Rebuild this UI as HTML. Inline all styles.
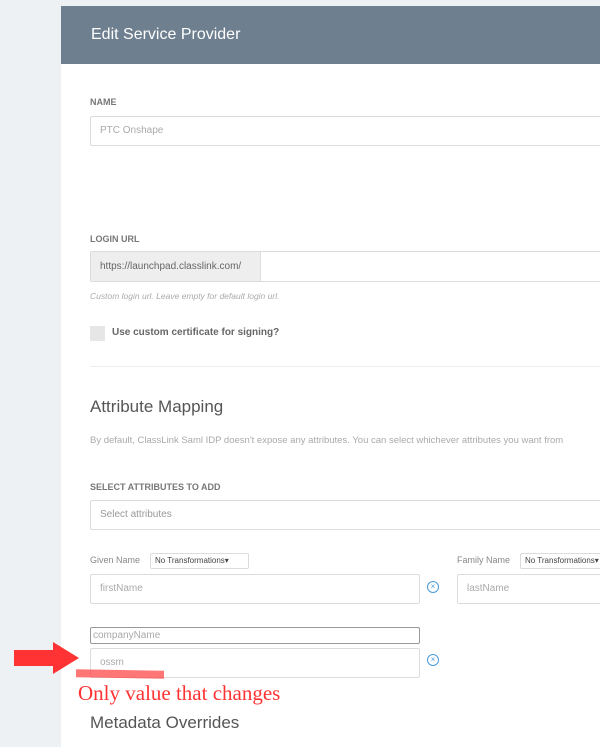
<!DOCTYPE html>
<html><head><style>
body{margin:0;width:600px;height:747px;background:#eef1f4;font-family:"Liberation Sans",sans-serif;position:relative;overflow:hidden}
.a{position:absolute}
.panel{left:61px;top:6px;width:539px;height:741px;background:#fff}
.hdr{left:61px;top:6px;width:539px;height:58px;background:#6e7f8f;color:#fff;font-size:16px;line-height:58px;text-indent:30px}
.lbl{font-size:9px;font-weight:bold;color:#777}
.inp{border:1px solid #dcdcdc;border-radius:2px;background:#fff;box-sizing:border-box;font-size:10px;color:#aaa;padding-left:9px}
.x{width:10px;height:10px;border:1px solid #4a9ad8;border-radius:50%;color:#4a9ad8;font-size:8px;line-height:10px;text-align:center}
</style></head><body>
<div class="a panel"></div>
<div class="a hdr">Edit Service Provider</div>
<div class="a lbl" style="left:90px;top:97px">NAME</div>
<div class="a inp" style="left:90px;top:116px;width:520px;height:30px;line-height:28px">PTC Onshape</div>
<div class="a lbl" style="left:90px;top:234px">LOGIN URL</div>
<div class="a inp" style="left:90px;top:251px;width:520px;height:31px"></div>
<div class="a" style="left:91px;top:252px;width:169px;height:29px;background:#eee;border-right:1px solid #ddd;font-size:10px;color:#666;line-height:29px;text-indent:9px">https://launchpad.classlink.com/</div>
<div class="a" style="left:90px;top:291px;font-size:8.5px;font-style:italic;color:#aaa">Custom login url. Leave empty for default login url.</div>
<div class="a" style="left:90px;top:326px;width:15px;height:15px;background:#e6e6e6"></div>
<div class="a" style="left:112px;top:327px;font-size:10px;font-weight:bold;color:#666">Use custom certificate for signing?</div>
<div class="a" style="left:90px;top:366px;width:510px;height:1px;background:#eee"></div>
<div class="a" style="left:90px;top:397px;font-size:17px;color:#555">Attribute Mapping</div>
<div class="a" style="left:90px;top:435px;font-size:9.5px;color:#aaa;white-space:nowrap">By default, ClassLink Saml IDP doesn't expose any attributes. You can select whichever attributes you want from</div>
<div class="a lbl" style="left:90px;top:482px">SELECT ATTRIBUTES TO ADD</div>
<div class="a inp" style="left:90px;top:500px;width:520px;height:30px;line-height:28px;color:#999">Select attributes</div>
<div class="a" style="left:90px;top:555px;font-size:9px;color:#888">Given Name</div>
<div class="a inp" style="left:150px;top:553px;width:99px;height:16px;font-size:8px;color:#444;padding-left:4px;line-height:14px">No Transformations▾</div>
<div class="a" style="left:457px;top:555px;font-size:9px;color:#888">Family Name</div>
<div class="a inp" style="left:520px;top:553px;width:99px;height:16px;font-size:8px;color:#444;padding-left:4px;line-height:14px">No Transformations▾</div>
<div class="a inp" style="left:90px;top:574px;width:330px;height:30px;line-height:28px">firstName</div>
<div class="a x" style="left:427px;top:581px">×</div>
<div class="a inp" style="left:457px;top:574px;width:160px;height:30px;line-height:28px">lastName</div>
<div class="a inp" style="left:90px;top:627px;width:330px;height:17px;line-height:15px;border:1px solid #999;padding-left:2px">companyName</div>
<div class="a inp" style="left:90px;top:648px;width:330px;height:30px;line-height:28px">ossm</div>
<div class="a x" style="left:427px;top:654px">×</div>
<svg class="a" style="left:14px;top:642px" width="66" height="35"><polygon points="0,8 39,8 39,0 65,16 39,32 39,24 0,24" fill="#f33"/></svg>
<div class="a" style="left:76px;top:670px;width:88px;height:8px;background:rgba(255,60,60,.7);transform:rotate(1deg)"></div>
<div class="a" style="left:78px;top:681px;font-family:'Liberation Serif',serif;font-size:21px;color:#f33">Only value that changes</div>
<div class="a" style="left:90px;top:713px;font-size:17px;color:#555">Metadata Overrides</div>
</body></html>
